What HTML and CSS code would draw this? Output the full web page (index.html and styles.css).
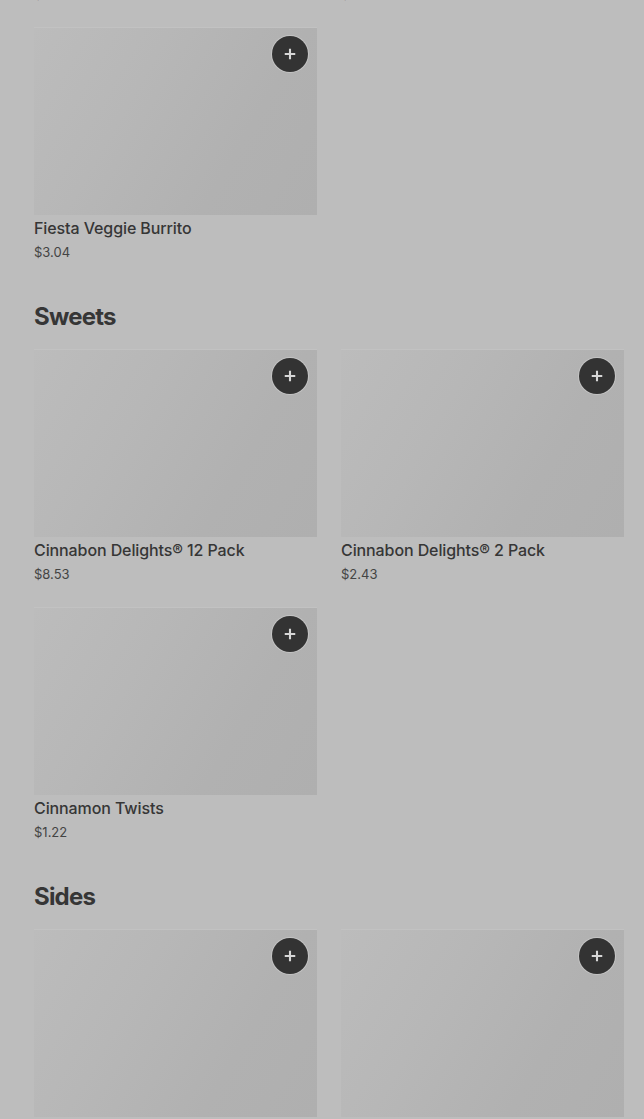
FILE: index.html
```html
<!DOCTYPE html>
<html>
<head>
<meta charset="utf-8">
<link rel="stylesheet" href="styles.css">
</head>
<body>
<main class="menu">
  <div class="grid">
    <div class="card"><div class="thumb"><button class="add"><svg viewBox="0 0 16 16" width="14" height="14"><path d="M8 2v12M2 8h12" stroke="currentColor" stroke-width="2.4"/></svg></button></div><div class="name">Spicy Potato Soft Taco</div><div class="price">$1.83</div></div>
    <div class="card"><div class="thumb"><button class="add"><svg viewBox="0 0 16 16" width="14" height="14"><path d="M8 2v12M2 8h12" stroke="currentColor" stroke-width="2.4"/></svg></button></div><div class="name">Black Bean Chalupa</div><div class="price">$4.27</div></div>
    <div class="card"><div class="thumb"><button class="add"><svg viewBox="0 0 16 16" width="14" height="14"><path d="M8 2v12M2 8h12" stroke="currentColor" stroke-width="2.4"/></svg></button></div><div class="name">Fiesta Veggie Burrito</div><div class="price">$3.04</div></div>
  </div>

  <section class="section">
    <h2 class="heading">Sweets</h2>
    <div class="grid">
      <div class="card"><div class="thumb"><button class="add"><svg viewBox="0 0 16 16" width="14" height="14"><path d="M8 2v12M2 8h12" stroke="currentColor" stroke-width="2.4"/></svg></button></div><div class="name">Cinnabon Delights® 12 Pack</div><div class="price">$8.53</div></div>
      <div class="card"><div class="thumb"><button class="add"><svg viewBox="0 0 16 16" width="14" height="14"><path d="M8 2v12M2 8h12" stroke="currentColor" stroke-width="2.4"/></svg></button></div><div class="name">Cinnabon Delights® 2 Pack</div><div class="price">$2.43</div></div>
      <div class="card"><div class="thumb"><button class="add"><svg viewBox="0 0 16 16" width="14" height="14"><path d="M8 2v12M2 8h12" stroke="currentColor" stroke-width="2.4"/></svg></button></div><div class="name">Cinnamon Twists</div><div class="price">$1.22</div></div>
    </div>
  </section>

  <section class="section">
    <h2 class="heading">Sides</h2>
    <div class="grid">
      <div class="card"><div class="thumb"><button class="add"><svg viewBox="0 0 16 16" width="14" height="14"><path d="M8 2v12M2 8h12" stroke="currentColor" stroke-width="2.4"/></svg></button></div><div class="name">Chips and Nacho Cheese Sauce</div><div class="price">$2.19</div></div>
      <div class="card"><div class="thumb"><button class="add"><svg viewBox="0 0 16 16" width="14" height="14"><path d="M8 2v12M2 8h12" stroke="currentColor" stroke-width="2.4"/></svg></button></div><div class="name">Black Beans and Rice</div><div class="price">$2.19</div></div>
    </div>
  </section>
</main>
</body>
</html>
```

FILE: styles.css
```css
* { box-sizing: border-box; }
html, body {
  margin: 0;
  background: #bdbdbd;
  font-family: Inter, "Noto Sans", "Liberation Sans", sans-serif;
  color: #333;
}
body { overflow: hidden; }
.menu {
  padding: 0 20px 0 34px;
  margin-top: -231px;
}
.grid {
  display: grid;
  grid-template-columns: 283px 283px;
  column-gap: 24px;
  row-gap: 24px;
}
.card { display: flex; flex-direction: column; }
.thumb {
  position: relative;
  height: 188px;
  background: linear-gradient(120deg, #bcbcbc 0%, #b7b7b7 35%, #b1b1b1 70%, #afafaf 100%);
  border-top: 1px solid #c2c2c2;
}
.add {
  position: absolute;
  top: 8px;
  right: 9px;
  width: 36px;
  height: 36px;
  border-radius: 50%;
  border: none;
  padding: 0;
  background: #333333;
  color: #d6d6d6;
  display: flex;
  align-items: center;
  justify-content: center;
  box-shadow: 0 0 0 1px #c4c4c4;
}
.name {
  margin-top: 3px;
  font-size: 16px;
  line-height: 20px;
  font-weight: 500;
  color: #363636;
  letter-spacing: -0.1px;
}
.price {
  margin-top: 5px;
  font-size: 13px;
  line-height: 18px;
  color: #444;
}
.section { margin-top: 40px; }
.heading {
  margin: 0 0 16px;
  font-size: 24px;
  line-height: 32px;
  font-weight: 700;
  color: #363636;
  letter-spacing: -0.8px;
}
```
